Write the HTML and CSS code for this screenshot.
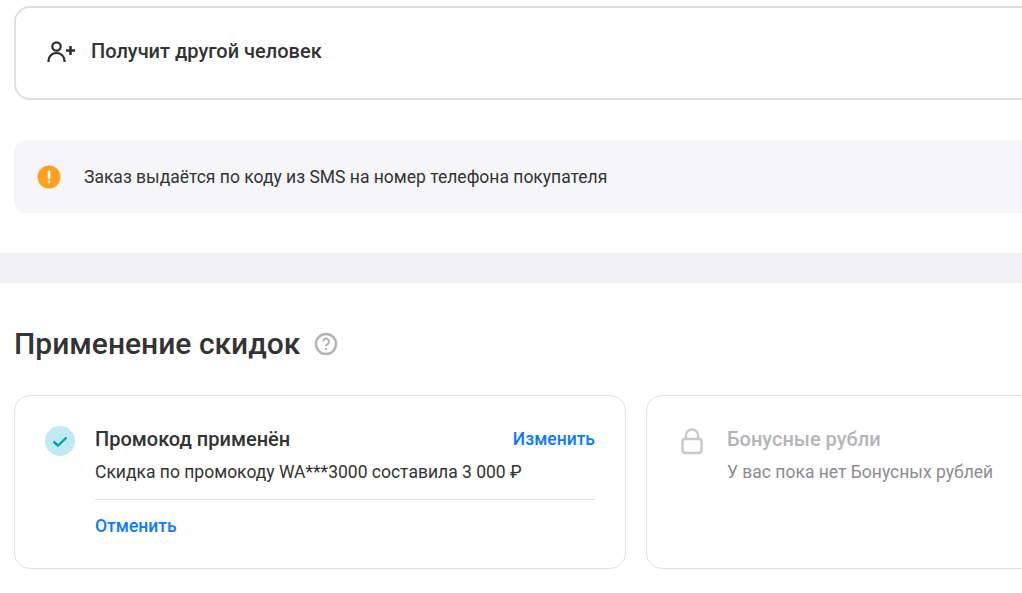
FILE: index.html
```html
<!DOCTYPE html>
<html lang="ru">
<head>
  <meta charset="UTF-8" />
  <title>Оформление заказа</title>
  <link rel="stylesheet" href="styles.css">
</head>
<body>
  <div class="section">
    <!-- Получатель -->
    <div class="receiver">
      <svg class="receiver-icon" width="30" height="24" viewBox="0 0 30 24" fill="none" stroke="#2d2d2d" stroke-width="2.200">
        <circle cx="10.500" cy="6.500" r="4.200" />
        <path d="M2.500 22v-1.500a8 7.500 0 0 1 16 0V22" />
        <path d="M20 10.500h9M24.500 6v9" stroke-width="2.500" />
      </svg>
      <span class="receiver-title">Получит другой человек</span>
    </div>

    <!-- Уведомление -->
    <div class="notice">
      <svg class="notice-icon" width="24" height="24" viewBox="0 0 24 24">
        <circle cx="12" cy="12" r="11.500" fill="#ffa01e" />
        <rect x="10.700" y="5.500" width="2.600" height="8.500" rx="1" fill="#fff" />
        <rect x="10.700" y="15.500" width="2.600" height="2.800" rx="1" fill="#fff" />
      </svg>
      <span>Заказ выдаётся по коду из SMS на номер телефона покупателя</span>
    </div>
  </div>

  <div class="band"></div>

  <div class="section">
    <div class="heading">
      <h2>Применение скидок</h2>
      <svg width="24" height="24" viewBox="0 0 24 24" fill="none">
        <circle cx="12" cy="12" r="10" stroke="#b3b3b3" stroke-width="2.400" />
        <path d="M9 9.600a3 3 0 1 1 4.600 2.500c-1 .7-1.600 1.200-1.600 2.400" stroke="#b3b3b3" stroke-width="2" />
        <rect x="11" y="16" width="2" height="2" fill="#b3b3b3" />
      </svg>
    </div>

    <div class="cards">
      <div class="card">
        <svg class="card-icon" width="30" height="30" viewBox="0 0 30 30" fill="none">
          <circle cx="15" cy="15" r="15" fill="#bfeaf0" />
          <path d="M8.500 15.500l4.500 4 8.500-8" stroke="#00a5b5" stroke-width="2.400" />
        </svg>
        <div class="card-body">
          <div class="card-top">
            <span class="card-title">Промокод применён</span>
            <a class="link" href="#">Изменить</a>
          </div>
          <div class="card-text">Скидка по промокоду WA***3000 составила 3 000 ₽</div>
          <div class="card-footer">
            <a class="link" href="#">Отменить</a>
          </div>
        </div>
      </div>

      <div class="card card-disabled">
        <svg class="card-icon" width="30" height="30" viewBox="0 0 30 30" fill="none" stroke="#c9c9cd" stroke-width="2.400">
          <rect x="5.500" y="13" width="19" height="14" rx="2.500" />
          <path d="M9 13V9.500a6 6 0 0 1 12 0V13" />
        </svg>
        <div class="card-body">
          <div class="card-top">
            <span class="card-title">Бонусные рубли</span>
          </div>
          <div class="card-text">У вас пока нет Бонусных рублей</div>
        </div>
      </div>
    </div>
  </div>
</body>
</html>
```

FILE: styles.css
```css
body {
  margin: 0;
  font-family: "Roboto", "Liberation Sans", sans-serif;
  font-size: 17.5px;
  color: #333;
  background: #fff;
  overflow: hidden;
  height: 593px;
}

.section {
  padding-left: 14px;
  width: 1244px;
}

.receiver {
  display: flex;
  align-items: center;
  box-sizing: border-box;
  height: 94px;
  margin-top: 6px;
  padding: 0 0 2px 30px;
  border: 2px solid #e0e0e3;
  border-radius: 16px;
}

.receiver-icon {
  margin-right: 15px;
}

.receiver-title {
  font-size: 20px;
  font-weight: 500;
  line-height: 24px;
  margin-bottom: 2px;
}

.notice {
  display: flex;
  align-items: center;
  height: 73px;
  margin-top: 40px;
  padding-left: 23px;
  background: #f6f6f9;
  border-radius: 12px;
}

.notice-icon {
  margin-right: 23px;
}

.band {
  height: 30px;
  margin-top: 40px;
  background: #f2f2f6;
}

.heading {
  display: flex;
  align-items: center;
  gap: 14px;
  margin-top: 44px;
}

.heading h2 {
  margin: 0;
  font-size: 30px;
  line-height: 34px;
  font-weight: 500;
}

.cards {
  display: flex;
  gap: 20px;
  margin-top: 34px;
}

.card {
  display: flex;
  box-sizing: border-box;
  width: 612px;
  height: 174px;
  padding: 30px 30px 0;
  border: 1px solid #e0e0e3;
  border-radius: 16px;
}

.card-icon {
  flex: none;
  margin-right: 20px;
}

.card-body {
  flex: 1;
}

.card-top {
  display: flex;
  justify-content: space-between;
  line-height: 28px;
  margin-top: -1px;
}

.card-title {
  font-size: 20px;
  font-weight: 500;
}

.card-text {
  margin-top: 8px;
  line-height: 22px;
}

.card-footer {
  margin-top: 16px;
  padding-top: 15px;
  border-top: 1px solid #e0e0e3;
  line-height: 22px;
}

.link {
  color: #0a7aff;
  font-weight: 500;
  font-size: 17.5px;
  text-decoration: none;
}

.card-disabled .card-title {
  color: #b5b5b9;
}

.card-disabled .card-text {
  color: #8c8c90;
}
```
